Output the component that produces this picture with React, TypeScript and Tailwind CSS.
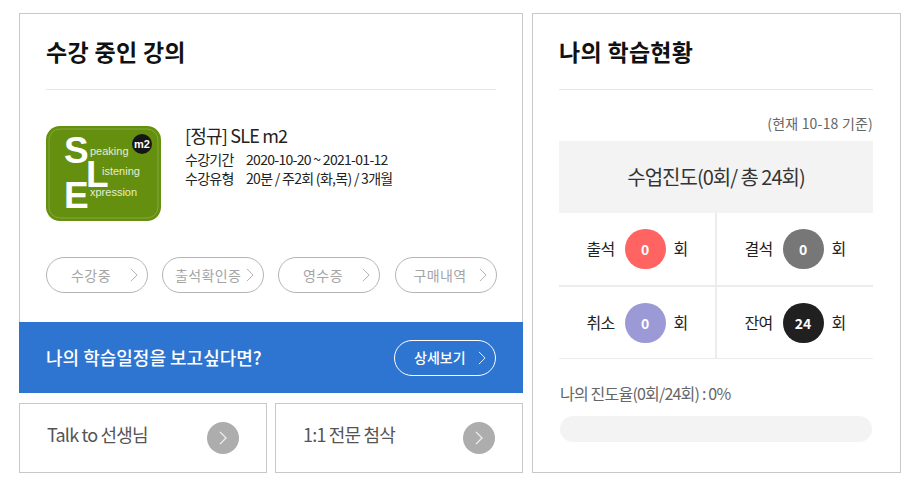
import React from 'react';

const font = { fontFamily: '"Noto Sans CJK KR", "Noto Sans", sans-serif' };

function Chevron({ className, strokeWidth = 1 }: { className?: string; strokeWidth?: number }) {
  return (
    <svg viewBox="0 0 9 16" className={className} fill="none" stroke="currentColor" strokeWidth={strokeWidth}>
      <path d="M1 1l7 7-7 7" />
    </svg>
  );
}

function SleLogo() {
  return (
    <svg width="115" height="95" viewBox="0 0 115 95" className="shrink-0">
      <rect width="115" height="95" rx="14" fill="#65900f" />
      <rect x="3" y="3" width="109" height="89" rx="11" fill="none" stroke="#84a83d" strokeWidth="1" />
      <g fontFamily="Liberation Sans, sans-serif" fill="#fff" fontWeight="700" fontSize="37">
        <text x="18" y="37">S</text>
        <text x="40" y="61">L</text>
        <text x="18" y="82">E</text>
      </g>
      <g fontFamily="Liberation Sans, sans-serif" fill="#e6edd4" fontSize="11">
        <text x="44" y="29">peaking</text>
        <text x="56" y="49">istening</text>
        <text x="44" y="70">xpression</text>
      </g>
      <circle cx="96" cy="18" r="10" fill="#161616" />
      <text x="96" y="22" textAnchor="middle" fontFamily="Liberation Sans, sans-serif" fontSize="11" fontWeight="700" fill="#fff">m2</text>
    </svg>
  );
}

function PillButton({ label, tight, className }: { label: string; tight?: boolean; className?: string }) {
  return (
    <div className={`relative flex h-[36px] w-[102px] items-center rounded-full border border-[#b4b4b4] text-[14px] tracking-[0.4px] text-[#a5a5a5] ${className ?? ''}`}>
      <span className={tight ? 'ml-[12px]' : 'w-[88px] text-center'}>{label}</span>
      <Chevron className="absolute right-[9px] top-[10px] h-[14px] w-[8px] text-[#a8a8a8]" />
    </div>
  );
}

function StatCell({ label, value, color }: { label: string; value: string; color: string }) {
  return (
    <div className="flex items-center text-[16px] leading-none tracking-[-0.8px] text-[#222]">
      <span className="mr-[10px] -mt-[2px] w-[28px] text-center">{label}</span>
      <span className={`mr-[8px] flex h-[40px] w-[41px] items-center justify-center rounded-full text-[14px] font-bold tracking-normal text-white ${color}`}>
        {value}
      </span>
      <span className="-mt-[2px]">회</span>
    </div>
  );
}

function LinkBox({ label }: { label: string }) {
  return (
    <div className="flex h-[70px] flex-1 items-center justify-between border border-[#c8c8c8] bg-white pl-[27px] pr-[27px]">
      <span className="-mt-[8px] text-[18px] tracking-[-0.8px] text-[#555]">{label}</span>
      <span className="flex h-[32px] w-[32px] items-center justify-center rounded-full bg-[#adadad]">
        <Chevron className="h-[14px] w-[8px] text-[#eeeeee]" strokeWidth={1.6} />
      </span>
    </div>
  );
}

export default function App() {
  return (
    <div className="flex h-[490px] w-[923px] gap-[9px] bg-white pl-[19px] pt-[13px]" style={font}>
      <div className="flex w-[504px] flex-col gap-[10px]">
        <div className="flex h-[380px] flex-col border border-b-0 border-[#c8c8c8]">
          <div className="mx-[26px] flex h-[76px] shrink-0 items-center border-b border-[#e6e6e6]">
            <h2 className="-mt-[1px] text-[23px] font-bold tracking-[0.3px] text-[#111]">수강 중인 강의</h2>
          </div>
          <div className="mt-[36px] flex gap-[24px] pl-[26px]">
            <SleLogo />
            <div className="text-[#222]">
              <p className="-mt-[3px] text-[18px] leading-[24px] tracking-[-0.8px]">[정규] SLE m2</p>
              <div className="mt-[3px] flex text-[14px] leading-[19px] tracking-[-0.7px]">
                <span className="w-[61px]">수강기간</span>
                <span>2020-10-20 ~ 2021-01-12</span>
              </div>
              <div className="flex text-[14px] leading-[19px] tracking-[-0.7px]">
                <span className="w-[61px]">수강유형</span>
                <span>20분 / 주2회 (화,목) / 3개월</span>
              </div>
            </div>
          </div>
          <div className="mt-[36px] flex gap-[14px] pl-[26px]">
            <PillButton label="수강중" />
            <PillButton label="출석확인증" tight />
            <PillButton label="영수증" />
            <PillButton label="구매내역" className="ml-[1px]" />
          </div>
          <div className="-mx-[1px] mt-auto flex h-[71px] items-center justify-between bg-[#2e75d1] pl-[27px] pr-[27px]">
            <span className="text-[18px] font-medium text-white">나의 학습일정을 보고싶다면?</span>
            <div className="relative flex h-[36px] w-[102px] items-center rounded-full border border-white text-[14px] font-medium text-white">
              <span className="ml-[19px]">상세보기</span>
              <Chevron className="absolute right-[9px] top-[10px] h-[14px] w-[8px]" />
            </div>
          </div>
        </div>
        <div className="flex gap-[8px]">
          <LinkBox label="Talk to 선생님" />
          <LinkBox label="1:1 전문 첨삭" />
        </div>
      </div>

      <div className="flex h-[460px] w-[369px] flex-col border border-[#c8c8c8] pl-[26px] pr-[27px]">
        <div className="flex h-[76px] shrink-0 items-center border-b border-[#e6e6e6]">
          <h2 className="-mt-[1px] text-[23px] font-bold tracking-[0.3px] text-[#111]">나의 학습현황</h2>
        </div>
        <p className="mt-[24px] text-right text-[14px] leading-[18px] tracking-[0.2px] text-[#666]">(현재 10-18 기준)</p>
        <div className="mt-[9px] flex h-[72px] shrink-0 items-center justify-center bg-[#f3f3f3] text-[20px] tracking-[-1px] text-[#333]">
          수업진도(0회/ 총 24회)
        </div>
        <div className="grid h-[146px] shrink-0 grid-cols-[158px_156px] grid-rows-[74px_72px] border-b border-[#ececec]">
          <div className="flex items-center justify-center border-r-2 border-b-2 border-[#ececec]">
            <StatCell label="출석" value="0" color="bg-[#ff6462]" />
          </div>
          <div className="flex items-center justify-center border-b-2 border-[#ececec]">
            <StatCell label="결석" value="0" color="bg-[#777777]" />
          </div>
          <div className="flex items-center justify-center border-r-2 border-[#ececec]">
            <StatCell label="취소" value="0" color="bg-[#9c9ad6]" />
          </div>
          <div className="flex items-center justify-center">
            <StatCell label="잔여" value="24" color="bg-[#202020]" />
          </div>
        </div>
        <p className="mt-[23px] ml-[1px] text-[16px] leading-[22px] tracking-[-0.8px] text-[#666]">나의 진도율(0회/24회) : 0%</p>
        <div className="mx-[1px] mt-[12px] h-[26px] rounded-full bg-[#f3f3f3]" />
      </div>
    </div>
  );
}
